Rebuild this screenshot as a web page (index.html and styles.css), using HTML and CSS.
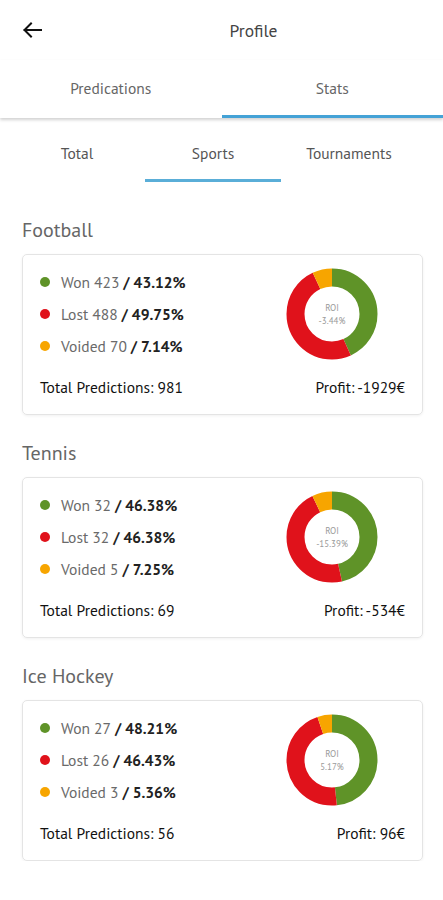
FILE: index.html
```html
<!DOCTYPE html>
<html lang="en">
<head>
<meta charset="utf-8">
<title>Profile</title>
<link rel="stylesheet" href="styles.css">
</head>
<body>
<header class="appbar">
  <button class="back" aria-label="Back">
    <svg width="20" height="16" viewBox="0 0 20 16"><path d="M19 8H2.5M9 1.5L2.5 8L9 14.5" fill="none" stroke="#111" stroke-width="2" stroke-linecap="square"/></svg>
  </button>
  <h1 class="title">Profile</h1>
</header>
<nav class="tabs">
  <div class="tab">Predications</div>
  <div class="tab active">Stats</div>
</nav>
<nav class="subtabs">
  <div class="subtab">Total</div>
  <div class="subtab active">Sports</div>
  <div class="subtab">Tournaments</div>
</nav>
<main class="content">
  <section class="sport">
    <h2 class="sport-title">Football</h2>
    <div class="card">
      <div class="card-top">
        <ul class="legend">
          <li><span class="dot won"></span><span class="lbl">Won 423</span><b>&nbsp;/ 43.12%</b></li>
          <li><span class="dot lost"></span><span class="lbl">Lost 488</span><b>&nbsp;/ 49.75%</b></li>
          <li><span class="dot void"></span><span class="lbl">Voided 70</span><b>&nbsp;/ 7.14%</b></li>
        </ul>
        <svg class="donut" width="92" height="92" viewBox="0 0 92 92">
          <g transform="rotate(-90 46 46)" fill="none" stroke-width="18">
            <circle cx="46" cy="46" r="36.5" stroke="#5f9328" stroke-dasharray="98.89 229.34" stroke-dashoffset="0"/>
            <circle cx="46" cy="46" r="36.5" stroke="#e0121b" stroke-dasharray="114.09 229.34" stroke-dashoffset="-98.89"/>
            <circle cx="46" cy="46" r="36.5" stroke="#f7a500" stroke-dasharray="16.37 229.34" stroke-dashoffset="-212.98"/>
          </g>
          <text x="46" y="43" class="roi">ROI</text>
          <text x="46" y="56" class="roi">-3.44%</text>
        </svg>
      </div>
      <div class="card-foot">
        <span>Total Predictions: 981</span>
        <span>Profit: -1929€</span>
      </div>
    </div>
  </section>
  <section class="sport">
    <h2 class="sport-title">Tennis</h2>
    <div class="card">
      <div class="card-top">
        <ul class="legend">
          <li><span class="dot won"></span><span class="lbl">Won 32</span><b>&nbsp;/ 46.38%</b></li>
          <li><span class="dot lost"></span><span class="lbl">Lost 32</span><b>&nbsp;/ 46.38%</b></li>
          <li><span class="dot void"></span><span class="lbl">Voided 5</span><b>&nbsp;/ 7.25%</b></li>
        </ul>
        <svg class="donut" width="92" height="92" viewBox="0 0 92 92">
          <g transform="rotate(-90 46 46)" fill="none" stroke-width="18">
            <circle cx="46" cy="46" r="36.5" stroke="#5f9328" stroke-dasharray="106.37 229.34" stroke-dashoffset="0"/>
            <circle cx="46" cy="46" r="36.5" stroke="#e0121b" stroke-dasharray="106.37 229.34" stroke-dashoffset="-106.37"/>
            <circle cx="46" cy="46" r="36.5" stroke="#f7a500" stroke-dasharray="16.63 229.34" stroke-dashoffset="-212.74"/>
          </g>
          <text x="46" y="43" class="roi">ROI</text>
          <text x="46" y="56" class="roi">-15.39%</text>
        </svg>
      </div>
      <div class="card-foot">
        <span>Total Predictions: 69</span>
        <span>Profit: -534€</span>
      </div>
    </div>
  </section>
  <section class="sport">
    <h2 class="sport-title">Ice Hockey</h2>
    <div class="card">
      <div class="card-top">
        <ul class="legend">
          <li><span class="dot won"></span><span class="lbl">Won 27</span><b>&nbsp;/ 48.21%</b></li>
          <li><span class="dot lost"></span><span class="lbl">Lost 26</span><b>&nbsp;/ 46.43%</b></li>
          <li><span class="dot void"></span><span class="lbl">Voided 3</span><b>&nbsp;/ 5.36%</b></li>
        </ul>
        <svg class="donut" width="92" height="92" viewBox="0 0 92 92">
          <g transform="rotate(-90 46 46)" fill="none" stroke-width="18">
            <circle cx="46" cy="46" r="36.5" stroke="#5f9328" stroke-dasharray="110.56 229.34" stroke-dashoffset="0"/>
            <circle cx="46" cy="46" r="36.5" stroke="#e0121b" stroke-dasharray="106.48 229.34" stroke-dashoffset="-110.56"/>
            <circle cx="46" cy="46" r="36.5" stroke="#f7a500" stroke-dasharray="12.29 229.34" stroke-dashoffset="-217.04"/>
          </g>
          <text x="46" y="43" class="roi">ROI</text>
          <text x="46" y="56" class="roi">5.17%</text>
        </svg>
      </div>
      <div class="card-foot">
        <span>Total Predictions: 56</span>
        <span>Profit: 96€</span>
      </div>
    </div>
  </section>
</main>
</body>
</html>
```
FILE: styles.css
```css
* { box-sizing: border-box; }
html, body { margin: 0; padding: 0; background: #fff; }
body {
  font-family: "PT Sans", Lato, "Liberation Sans", sans-serif;
  color: #222;
  width: 443px;
}

.appbar {
  height: 60px;
  display: flex;
  align-items: center;
  padding-left: 22px;
}
.back {
  border: 0;
  background: none;
  padding: 0;
  width: 20px;
  height: 16px;
  display: flex;
}
.title {
  flex: 1;
  margin: 0;
  padding-left: 22px;
  text-align: center;
  font-size: 17.5px;
  font-weight: 400;
  color: #444;
}

.tabs {
  display: flex;
  height: 58px;
  box-shadow: 0 2px 3px rgba(0,0,0,0.18);
  position: relative;
}
.tab {
  flex: 1;
  display: flex;
  align-items: center;
  justify-content: center;
  font-size: 15.5px;
  color: #666;
  border-bottom: 3px solid transparent;
}
.tab.active { border-bottom-color: #44a2d6; }

.subtabs {
  display: flex;
  padding-left: 9px;
  margin-top: 2px;
  height: 62px;
}
.subtab {
  width: 136px;
  display: flex;
  align-items: center;
  justify-content: center;
  padding-top: 6px;
  font-size: 15.5px;
  color: #555;
  border-bottom: 3px solid transparent;
}
.subtab.active { border-bottom-color: #5aaed8; }

.content {
  padding: 36px 20px 0 22px;
}
.sport + .sport { margin-top: 26px; }
.sport-title {
  margin: 0 0 12px;
  font-size: 20px;
  line-height: 24px;
  font-weight: 400;
  color: #666;
}
.card {
  border: 1px solid #e4e4e4;
  border-radius: 5px;
  box-shadow: 0 1px 3px rgba(0,0,0,0.06);
  padding: 11px 17px 17px 17px;
  height: 161px;
}
.card-top {
  display: flex;
  align-items: center;
  justify-content: space-between;
  padding-right: 27px;
}
.legend {
  list-style: none;
  margin: 0;
  padding: 0;
}
.legend li {
  display: flex;
  align-items: center;
  height: 32px;
  font-size: 15.5px;
}
.dot {
  width: 10px;
  height: 10px;
  border-radius: 50%;
  margin-right: 11px;
}
.dot.won { background: #5f9328; }
.dot.lost { background: #e0121b; }
.dot.void { background: #f7a500; }
.lbl { color: #6a6a6a; }
.legend b { font-weight: 700; color: #222; }

.donut { display: block; }
.roi {
  font-family: "PT Sans", Lato, "Liberation Sans", sans-serif;
  font-size: 9px;
  fill: #9a9a9a;
  text-anchor: middle;
}

.card-foot {
  display: flex;
  justify-content: space-between;
  margin-top: 15px;
  font-size: 15.5px;
  line-height: 20px;
  color: #111;
}
```
